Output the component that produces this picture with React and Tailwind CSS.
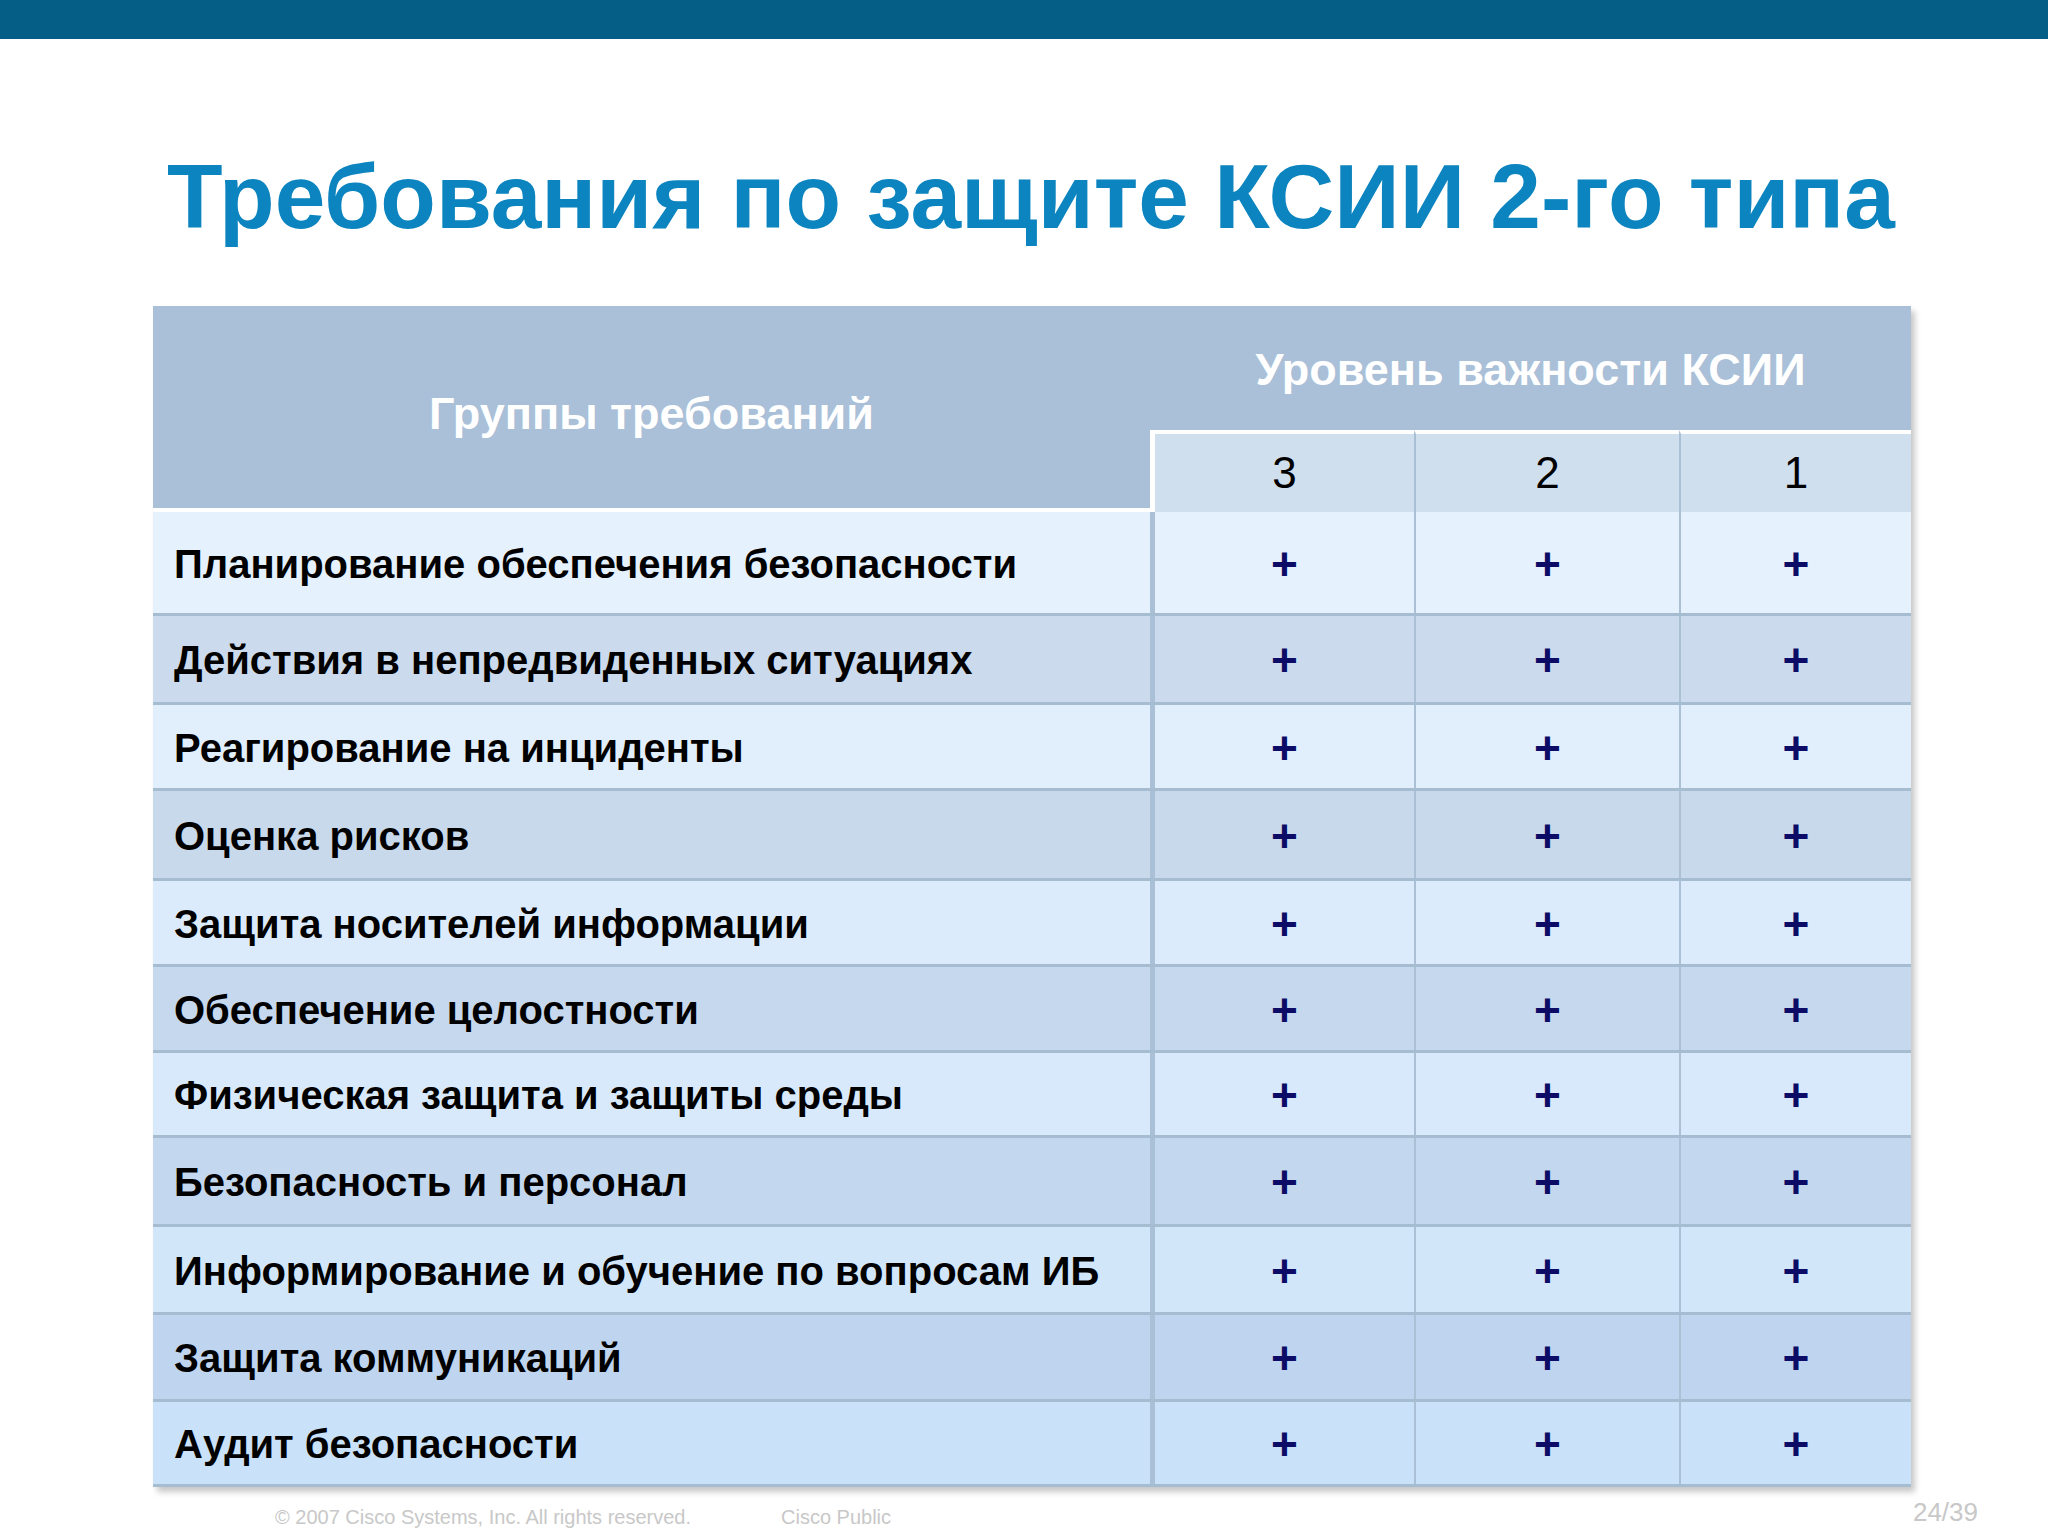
import React from 'react';

const rows = [
  { label: 'Планирование обеспечения безопасности', h: 'h-[104px]', bg: 'bg-[#e5f1fd]' },
  { label: 'Действия в непредвиденных ситуациях', h: 'h-[89px]', bg: 'bg-[#cbdbed]' },
  { label: 'Реагирование на инциденты', h: 'h-[86px]', bg: 'bg-[#e1eefc]' },
  { label: 'Оценка рисков', h: 'h-[90px]', bg: 'bg-[#c8d9ec]' },
  { label: 'Защита носителей информации', h: 'h-[86px]', bg: 'bg-[#dcebfb]' },
  { label: 'Обеспечение целостности', h: 'h-[86px]', bg: 'bg-[#c6d8ed]' },
  { label: 'Физическая защита и защиты среды', h: 'h-[85px]', bg: 'bg-[#d8e9fb]' },
  { label: 'Безопасность и персонал', h: 'h-[89px]', bg: 'bg-[#c3d7ee]' },
  { label: 'Информирование и обучение по вопросам ИБ', h: 'h-[88px]', bg: 'bg-[#d2e6fa]' },
  { label: 'Защита коммуникаций', h: 'h-[87px]', bg: 'bg-[#bfd4ee]' },
  { label: 'Аудит безопасности', h: 'h-[85px]', bg: 'bg-[#c9e1f9]' },
];

const cols = 'grid grid-cols-[997px_264px_265px_232px]';

function Plus() {
  return <span className="text-[46px] font-bold leading-none text-[#0c0c66]">+</span>;
}

export default function App() {
  return (
    <div className="w-[2048px] h-[1536px] bg-white overflow-hidden font-['Liberation_Sans',Arial,sans-serif]">
      {/* top bar */}
      <div className="h-[39px] bg-[#045e85]" />

      {/* title */}
      <h1 className="pt-[112px] pl-[167px] text-[91px] font-bold leading-none text-[#0b84bf]">
        Требования по защите КСИИ 2-го типа
      </h1>

      {/* table */}
      <div className="ml-[153px] mt-[64px] w-[1758px] shadow-[4px_5px_6px_rgba(0,0,0,0.22)]">
        <div className={`${cols} grid-rows-[124px_82px]`}>
          <div className="row-span-2 bg-[#a9c0d8] border-b-4 border-white flex items-center justify-center pt-[14px] text-[45px] font-bold text-white">
            Группы требований
          </div>
          <div className="col-span-3 bg-[#a9c0d8] flex items-center justify-center pt-[4px] text-[45px] font-bold text-white">
            Уровень важности КСИИ
          </div>
          {['3', '2', '1'].map((n, i) => (
            <div
              key={n}
              className={`bg-[#d0dfee] border-t-4 border-t-white flex items-center justify-center text-[44px] text-black ${
                i === 0 ? 'border-l-[5px] border-l-white' : 'border-l-2 border-l-[#a9bfd3]'
              }`}
            >
              {n}
            </div>
          ))}
        </div>

        {rows.map((r) => (
          <div key={r.label} className={`${cols} ${r.h} ${r.bg} border-b-[3px] border-[#a6bcd1]`}>
            <div className="flex items-center pl-[21px] pt-[2px] text-[40px] font-bold text-black">{r.label}</div>
            <div className="flex items-center justify-center pt-[2px] border-l-[5px] border-[#aac0d7]">
              <Plus />
            </div>
            <div className="flex items-center justify-center pt-[2px] border-l-2 border-[#abc0d4]">
              <Plus />
            </div>
            <div className="flex items-center justify-center pt-[2px] border-l-2 border-[#abc0d4]">
              <Plus />
            </div>
          </div>
        ))}
      </div>

      {/* footer */}
      <div className="flex items-center mt-[15px] pl-[275px] pr-[70px] text-[#c8c8c8]">
        <span className="text-[20px] font-['Liberation_Sans_Narrow','Arial_Narrow',sans-serif]">
          © 2007 Cisco Systems, Inc. All rights reserved.
        </span>
        <span className="ml-[90px] text-[20px] font-['Liberation_Sans_Narrow','Arial_Narrow',sans-serif]">
          Cisco Public
        </span>
        <span className="ml-auto -mt-[10px] text-[26px] font-['Liberation_Sans_Narrow','Arial_Narrow',sans-serif]">
          24/39
        </span>
      </div>
    </div>
  );
}
